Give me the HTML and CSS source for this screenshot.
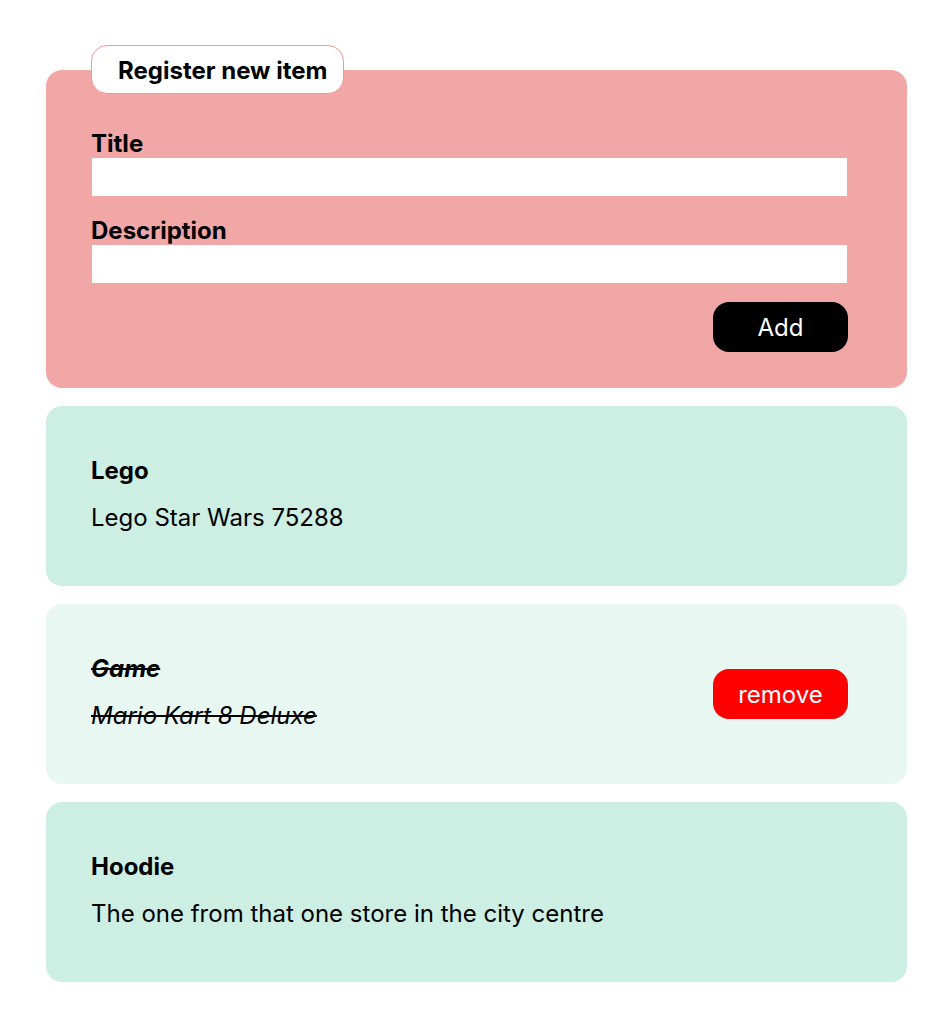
FILE: index.html
```html
<!DOCTYPE html>
<html lang="en">
<head>
<meta charset="utf-8">
<title>Items</title>
<link rel="stylesheet" href="styles.css">
</head>
<body>
<main class="page">
  <form class="register">
    <div class="legend">Register new item</div>
    <label class="label" for="title">Title</label>
    <input class="field" id="title" type="text">
    <label class="label label-next" for="desc">Description</label>
    <input class="field" id="desc" type="text">
    <div class="actions">
      <button type="button" class="btn btn-add">Add</button>
    </div>
  </form>

  <div class="item">
    <div class="item-text">
      <div class="item-title">Lego</div>
      <div class="item-desc">Lego Star Wars 75288</div>
    </div>
  </div>

  <div class="item item-done">
    <div class="item-text">
      <div class="item-title">Game</div>
      <div class="item-desc">Mario Kart 8 Deluxe</div>
    </div>
    <button type="button" class="btn btn-remove">remove</button>
  </div>

  <div class="item">
    <div class="item-text">
      <div class="item-title">Hoodie</div>
      <div class="item-desc">The one from that one store in the city centre</div>
    </div>
  </div>
</main>
</body>
</html>
```

FILE: styles.css
```css
* { box-sizing: border-box; }

body {
  margin: 0;
  background: #ffffff;
  font-family: Inter, "Liberation Sans", sans-serif;
  font-size: 24px;
  color: #000000;
}

.page {
  width: 861px;
  margin-left: 46px;
  padding-top: 70px;
  display: flex;
  flex-direction: column;
  gap: 18px;
}

.register {
  background: #f0a7a6;
  border-radius: 16px;
  padding: 0 59px 36px 45px;
  display: flex;
  flex-direction: column;
}

.legend {
  align-self: flex-start;
  margin-top: -25px;
  height: 49px;
  padding: 2px 16px 0 26px;
  background: #ffffff;
  border: 1px solid #ec9a9a;
  border-radius: 16px;
  font-size: 24px;
  font-weight: 700;
  line-height: 45px;
  margin-bottom: 35px;
}

.label {
  font-size: 24px;
  font-weight: 700;
  padding-top: 2px;
  line-height: 26px;
  margin-bottom: 1px;
}

.label-next { margin-top: 20px; }

.field {
  height: 38px;
  width: calc(100% - 2px);
  margin: 0 1px;
  border: none;
  background: #ffffff;
  font-family: inherit;
  font-size: 20px;
  padding: 0 8px;
  outline: none;
}

.actions {
  display: flex;
  justify-content: flex-end;
  margin-top: 19px;
}

.btn {
  width: 135px;
  height: 50px;
  border: none;
  border-radius: 16px;
  font-family: inherit;
  font-size: 24px;
  font-weight: 400;
  color: #ffffff;
  padding: 0;
  cursor: pointer;
}

.btn-add { background: #000000; }
.btn-remove { background: #ff0000; margin-right: 59px; }

.item {
  height: 180px;
  background: #cdeee3;
  border-radius: 16px;
  padding: 51px 0 0 45px;
  display: flex;
  align-items: flex-start;
  justify-content: space-between;
}

.item-done {
  background: #e8f7f2;
}
.item-done .btn-remove { margin-top: 14px; }

.item-title {
  font-size: 24px;
  font-weight: 700;
  line-height: 28px;
  margin-bottom: 19px;
}

.item-desc {
  font-size: 24px;
  font-weight: 400;
  line-height: 28px;
}

.item-done .item-title,
.item-done .item-desc {
  font-style: italic;
  text-decoration: line-through;
}
```
